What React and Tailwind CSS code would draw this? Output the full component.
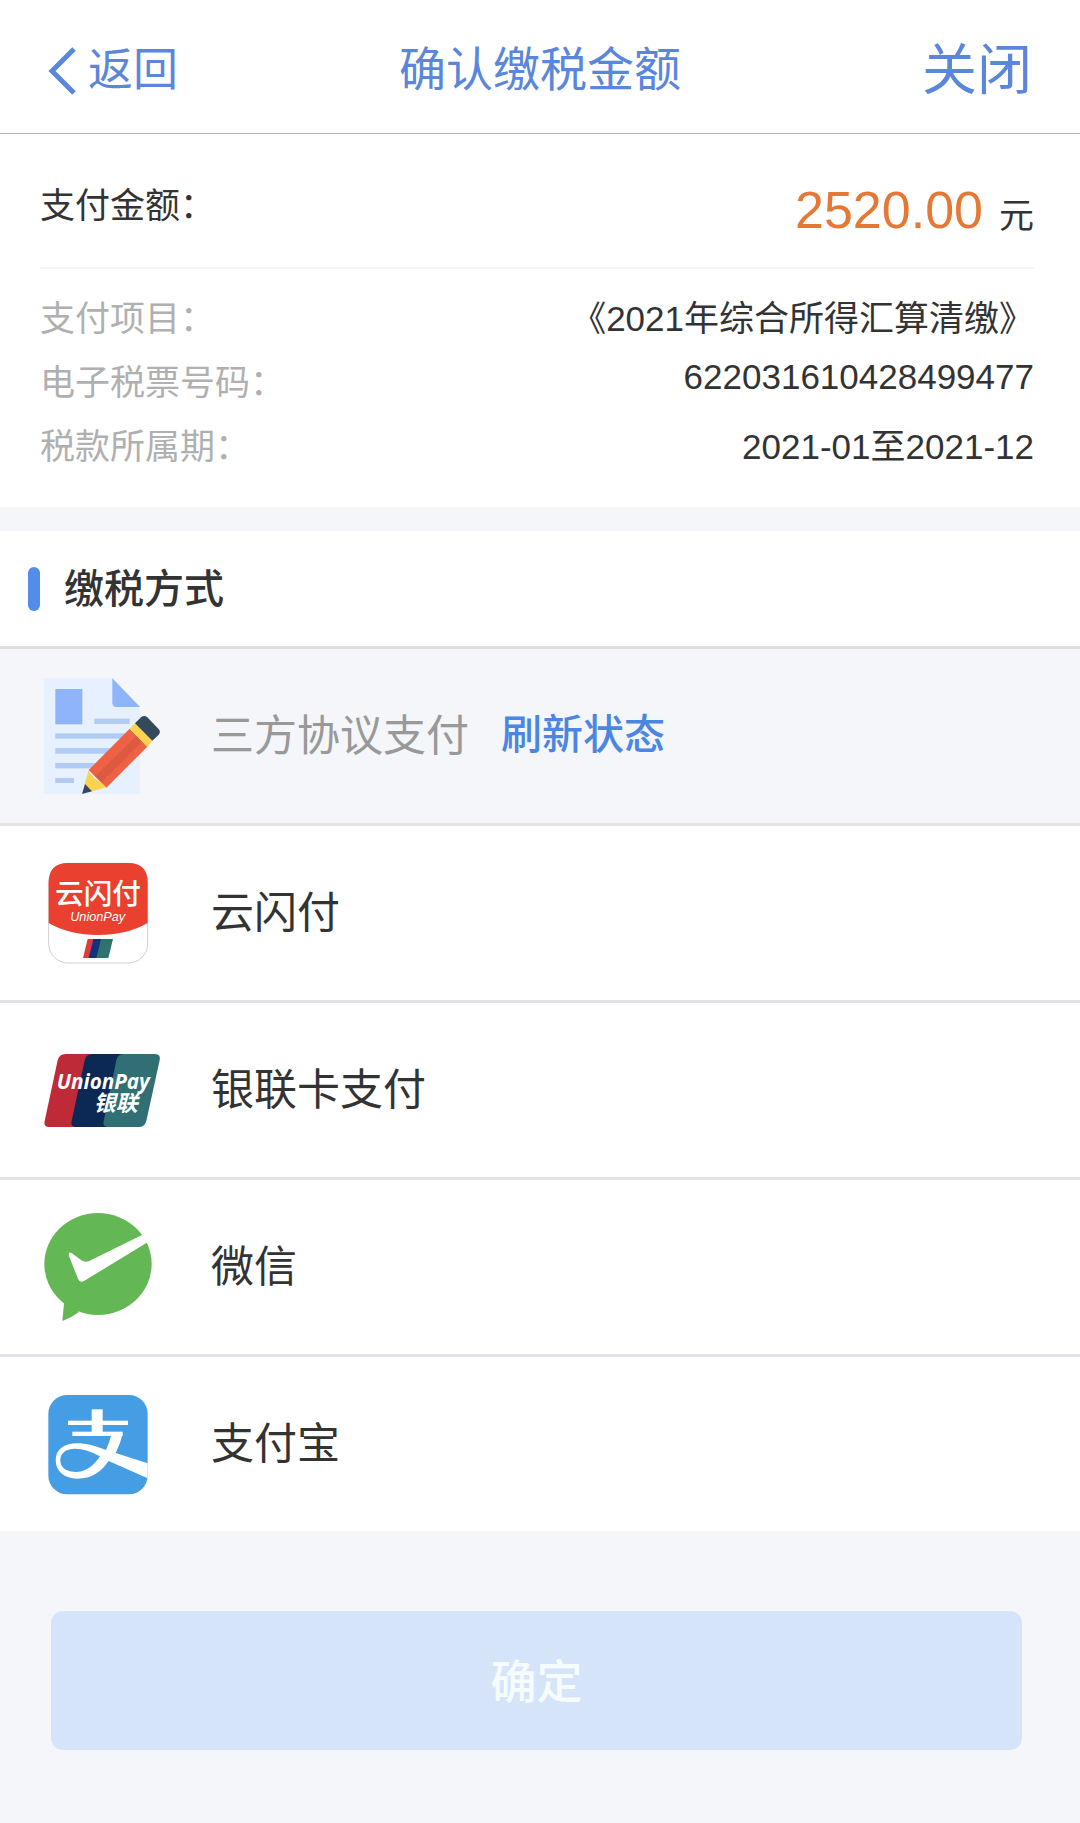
import { useState } from 'react';

const AgreementIcon = () => (
  <svg className="w-30 h-30 shrink-0" viewBox="69 78 360 360" aria-hidden="true">
    <path d="M72 85H277L360 170V432H72Z" fill="#e6f0fe" />
    <path d="M277 85L360 171H290Q277 171 277 158Z" fill="#8fb4fa" />
    <rect x="106" y="117" width="81" height="106" fill="#8fb4fa" />
    <g fill="#b1cbf4">
      <rect x="223" y="206" width="106" height="16" />
      <rect x="106" y="250" width="210" height="16" />
      <rect x="106" y="294" width="170" height="17" />
      <rect x="106" y="339" width="120" height="16" />
      <rect x="106" y="384" width="56" height="15" />
    </g>
    <path d="M329 236L382 290L259 413L206 360Z" fill="#ee6145" />
    <path d="M350 257L366 274L246 397L226 379Z" fill="#dc5a40" />
    <path d="M345 220L397 272L382 291L329 236Z" fill="#fbd34e" />
    <path d="M345 220L364 201Q373 194 382 202L415 236Q424 245 416 254L397 272Z" fill="#34495c" />
    <path d="M206 360L210 371Q219 377 225 386L245 399L259 412L211 425L193 405Z" fill="#fbd34e" />
    <path d="M195 402L216 424L186 432Z" fill="#34495c" />
  </svg>
);

const QuickPassIcon = () => (
  <svg className="w-30 h-30 shrink-0" viewBox="69 39 360 360" aria-hidden="true">
    <rect x="86" y="70" width="297" height="299" rx="58" fill="#fff" stroke="#d3cfd0" strokeWidth="3" />
    <path d="M86 249V128Q86 69 144 69H325Q383 69 383 128V249Q320 285 234 285T86 249Z" fill="#e9402f" />
    <text x="234" y="191" textAnchor="middle" fontFamily="Noto Sans CJK SC, sans-serif" fontWeight="500" fontSize="86" fill="#fff">云闪付</text>
    <text x="233" y="243" textAnchor="middle" fontFamily="Liberation Sans, sans-serif" fontStyle="italic" fontSize="38" fill="#fff">UnionPay</text>
    <path d="M203 297H222L208 354H189Z" fill="#dc3c3c" />
    <path d="M220 297H246L232 354H206Z" fill="#14327c" />
    <path d="M243 297H279L265 354H229Z" fill="#2c746c" />
  </svg>
);

const UnionPayIcon = () => (
  <svg className="w-30 h-30 shrink-0" viewBox="69 0 360 360" aria-hidden="true">
    <path d="M137 72H230L180 291H88Q70 291 74 273L113 91Q118 72 137 72Z" fill="#be2a38" />
    <path d="M217 72H315L270 291H170Q150 291 155 273L194 91Q199 72 217 72Z" fill="#0c2854" />
    <path d="M310 72H405Q423 72 419 91L379 273Q374 291 356 291H265Q247 291 251 273L289 91Q294 72 310 72Z" fill="#307074" />
    <text x="250" y="177" textAnchor="middle" fontFamily="Open Sans, sans-serif" fontWeight="700" fontStyle="italic" fontSize="62" fill="#fff">UnionPay</text>
    <text x="287" y="244" textAnchor="middle" fontFamily="Noto Sans CJK SC, sans-serif" fontWeight="700" fontStyle="italic" fontSize="66" fill="#fff">银联</text>
  </svg>
);

const WechatIcon = () => (
  <svg className="w-30 h-30 shrink-0" viewBox="69 50 360 360" aria-hidden="true">
    <path d="M133 330L127 392Q155 382 177 365Z" fill="#63b755" />
    <ellipse cx="234" cy="221" rx="161" ry="153" fill="#63b755" />
    <path d="M147 188Q150 184 156 189L184 210Q193 216 206 213L366 134L384 155L192 272Q180 279 174 265L148 200Q145 192 147 188Z" fill="#fff" />
  </svg>
);

const AlipayIcon = () => (
  <svg className="w-30 h-30 shrink-0" viewBox="69 39 360 360" aria-hidden="true">
    <rect x="85" y="72" width="298" height="298" rx="56" fill="#459de3" />
    <g fill="#fff">
      <rect x="215" y="115" width="33" height="76" />
      <rect x="144" y="149" width="180" height="13" />
      <rect x="157" y="182" width="151" height="13" />
      <path
        fillRule="evenodd"
        d="M275 188H308Q302 216 287 246L383 277V322L266 270C244 302 216 323 172 323C133 323 107 301 107 268C107 236 132 217 170 217C200 217 226 225 258 237Q268 215 275 188ZM240 256C213 241 186 232 161 233C134 235 120 249 121 270C122 291 140 303 170 303C201 302 222 282 240 256Z"
      />
    </g>
  </svg>
);

const details = [
  { label: '支付项目：', value: '《2021年综合所得汇算清缴》' },
  { label: '电子税票号码：', value: '622031610428499477', compact: true },
  { label: '税款所属期：', value: '2021-01至2021-12' },
];

const methods = [
  { id: 'quickpass', name: '云闪付', Icon: QuickPassIcon },
  { id: 'unionpay', name: '银联卡支付', Icon: UnionPayIcon },
  { id: 'wechat', name: '微信', Icon: WechatIcon },
  { id: 'alipay', name: '支付宝', Icon: AlipayIcon },
];

export default function App() {
  const [selected, setSelected] = useState(null);

  return (
    <div lang="zh-CN" className="min-h-screen bg-[#f4f6fa] text-[#333] font-['Liberation_Sans','Noto_Sans_CJK_SC',sans-serif]">
      <header className="grid grid-cols-[1fr_auto_1fr] items-center h-[134px] px-12 pt-2 bg-white border-b border-[#b4b4b4] text-[#5a86dc]">
        <button type="button" className="flex items-center gap-3 justify-self-start text-[45px]">
          <svg className="w-7 h-12" viewBox="0 0 28 48" fill="none" stroke="currentColor" strokeWidth="5" aria-hidden="true">
            <path d="M26 2L4 24L26 46" />
          </svg>
          返回
        </button>
        <h1 className="text-[47px]">确认缴税金额</h1>
        <button type="button" className="justify-self-end text-[55px]">关闭</button>
      </header>

      {/* Payment summary */}
      <section className="pl-10 pr-[46px] pb-7 bg-white text-[35px]">
        <div className="flex justify-between h-[135px] pt-10 border-b-2 border-[#f5f5f5]">
          <span className="leading-[64px]">支付金额：</span>
          <span className="flex items-baseline gap-4 leading-[72px]">
            <span className="text-[52px] text-[#e67835]">2520.00</span>
            <span>元</span>
          </span>
        </div>
        <dl className="pt-[18px]">
          {details.map((item) => (
            <div key={item.label} className="flex justify-between h-16 leading-[64px]">
              <dt className="text-[#b0b0b0]">{item.label}</dt>
              <dd className={item.compact ? 'leading-[52px]' : ''}>{item.value}</dd>
            </div>
          ))}
        </dl>
      </section>

      {/* Payment methods */}
      <section className="mt-6 bg-white">
        <div className="flex items-center gap-6 h-[115px] px-7">
          <span className="w-3 h-11 rounded-full bg-[#548cea]" />
          <h2 className="text-[40px] font-medium">缴税方式</h2>
        </div>
        <ul className="text-[43px]">
          <li className="flex items-center gap-12 h-[177px] px-[43px] border-t-3 border-[#dcdee2] bg-[#f4f6fa]">
            <AgreementIcon />
            <div className="flex items-center gap-8">
              <span className="text-[#999]">三方协议支付</span>
              <button type="button" className="text-[41px] font-medium text-[#4a86e2]">刷新状态</button>
            </div>
          </li>
          {methods.map(({ id, name, Icon }) => (
            <li key={id} className="h-[177px] border-t-3 border-[#e2e3e6]">
              <button
                type="button"
                aria-pressed={selected === id}
                onClick={() => setSelected(id)}
                className="flex items-center gap-12 w-full h-full px-[43px] text-left"
              >
                <Icon />
                {name}
              </button>
            </li>
          ))}
        </ul>
      </section>

      <div className="pt-20 pb-18 pl-[51px] pr-[58px]">
        <button type="button" disabled={!selected} className="w-full h-[139px] pt-1 rounded-xl bg-[#5490ee] text-[46px] font-medium text-white disabled:bg-[#d6e4fa] disabled:text-[#f6fbfe]">
          确定
        </button>
      </div>
    </div>
  );
}
